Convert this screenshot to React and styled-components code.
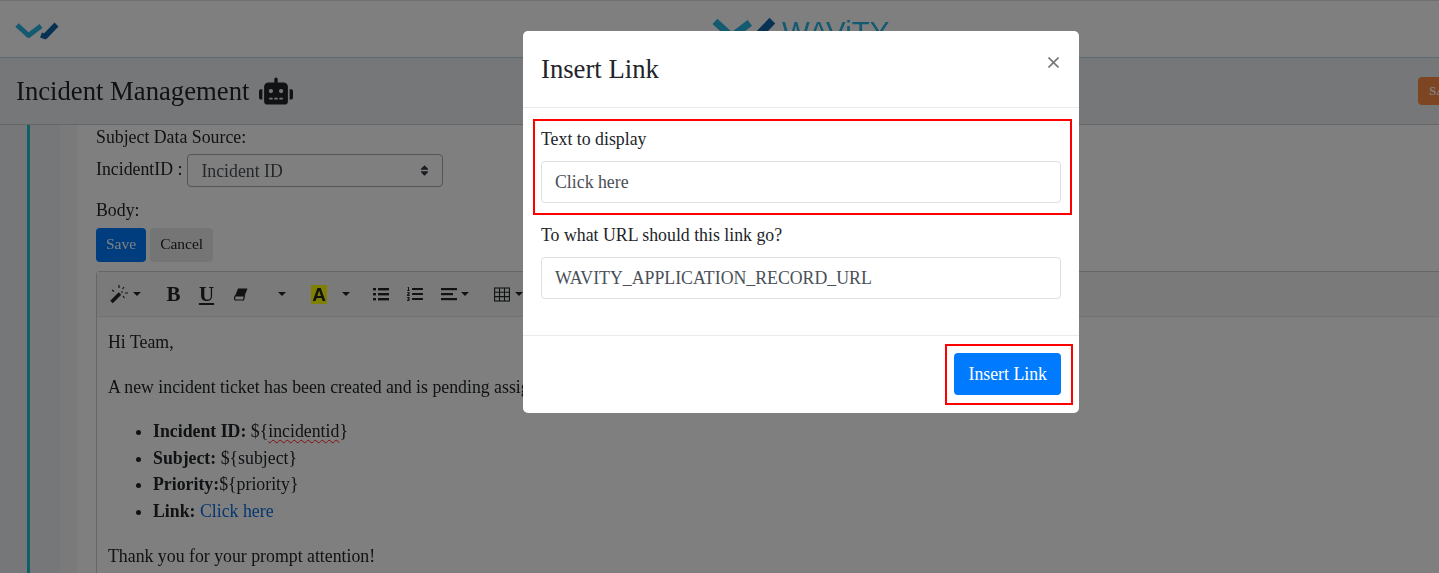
import React from 'react';
import styled, { createGlobalStyle } from 'styled-components';
import { FaRobot, FaListOl, FaSort } from 'react-icons/fa';

const GlobalStyle = createGlobalStyle`
  html, body {
    margin: 0;
    padding: 0;
    height: 100%;
    overflow: hidden;
    font-family: "Liberation Serif", "Times New Roman", serif;
    font-size: 17.8px;
    color: #212529;
    background: #fff;
  }
  * { box-sizing: border-box; }
`;

const Page = styled.div`
  position: relative;
  height: 573px;
  overflow: hidden;
  filter: blur(0.35px);
`;

const TopBar = styled.header`
  height: 58px;
  border-top: 1px solid #dedede;
  border-bottom: 1px solid #b4d4e0;
  display: flex;
  align-items: center;
  padding-left: 15px;
`;

const SmallMark = styled.span`
  display: flex;
  margin-top: 4px;
`;

const Brand = styled.div`
  align-self: flex-start;
  margin-left: 653px;
  padding-top: 16px;
  display: flex;
  align-items: flex-start;
  gap: 6px;
  color: #28b4e0;
  font-family: "Liberation Sans", Arial, sans-serif;
  font-size: 29.4px;
  line-height: 29px;
`;

const TitleBar = styled.div`
  height: 67px;
  background: #eceef1;
  border-bottom: 1px solid #ccc;
  display: flex;
  align-items: center;
  justify-content: space-between;
  padding-left: 16px;
`;

const PageTitle = styled.h1`
  margin: 0;
  font-size: 26.7px;
  font-weight: 400;
  display: flex;
  align-items: center;
  gap: 10px;
`;

const SubmitTab = styled.button`
  width: 60px;
  height: 28px;
  margin-right: -39px;
  padding: 0 0 0 11px;
  border: 0;
  border-radius: 4px;
  background: #fd8a45;
  color: #fff;
  font: 700 13px "Liberation Serif", serif;
  text-align: left;
`;

const Workspace = styled.div`
  display: grid;
  grid-template-columns: 27px 3px 30px 17px minmax(0, 1fr);
  height: 448px;
`;

const Gutter = styled.div`
  background: ${p => p.$bg};
`;

const Form = styled.main`
  padding-left: 19px;
  margin-right: -10px;
`;

const FieldLabel = styled.div`
  line-height: 24px;
`;

const SourceRow = styled.div`
  display: flex;
  align-items: flex-start;
  gap: 5px;
  margin: 5px 0 11px;
`;

const RowLabel = styled.span`
  padding-top: 5px;
`;

const SelectBox = styled.div`
  width: 256px;
  height: 33px;
  padding: 3px 13px 0;
  border: 1px solid #aaa;
  border-radius: 4px;
  color: #495057;
  display: flex;
  align-items: center;
  justify-content: space-between;
  line-height: 1;
  svg { font-size: 13px; color: #343a40; margin: -3px -2px 0 0; }
`;

const ButtonRow = styled.div`
  display: flex;
  gap: 4px;
  margin: 6px 0 9px;
`;

const SmallButton = styled.button`
  height: 34px;
  padding: 0 10px 2px;
  border: 0;
  border-radius: 4px;
  font: 15.5px "Liberation Serif", serif;
  background: ${p => (p.$primary ? '#007bff' : '#ebebeb')};
  color: ${p => (p.$primary ? '#fff' : '#212529')};
`;

const Editor = styled.section`
  border: 1px solid #ccc;
  border-bottom: 0;
  border-radius: 4px 4px 0 0;
`;

const Toolbar = styled.div`
  height: 45px;
  padding-left: 13px;
  border-bottom: 1px solid #e4e4e4;
  background: #f5f5f5;
  display: flex;
  align-items: center;
  color: #212529;
`;

const ToolIcon = styled.span`
  display: inline-flex;
  align-items: center;
  justify-content: center;
  flex: none;
  width: ${p => p.$w || 16}px;
  margin-right: ${p => p.$mr || 0}px;
  svg { display: block; }
`;

const SerifGlyph = styled.span`
  font: 700 21px/1 "Liberation Serif", serif;
  text-decoration: ${p => (p.$underline ? 'underline' : 'none')};
  text-underline-offset: 2px;
  text-decoration-thickness: 2px;
`;

const CaretShape = styled.span`
  width: 0;
  height: 0;
  border-left: 4px solid transparent;
  border-right: 4px solid transparent;
  border-top: 4px solid #212529;
`;

const Highlight = styled.span`
  flex: none;
  width: 16px;
  height: 19px;
  margin-right: 15px;
  background: #ffff00;
  color: #212529;
  font: 700 19px/20px "Liberation Sans", Arial, sans-serif;
  text-align: center;
`;

const EditorBody = styled.div`
  padding: 13px 11px;
  white-space: nowrap;
  p { margin: 0 0 21px; line-height: 24px; }
  p + ul { margin-top: -2px; }
  ul { margin: 0 0 19px; padding-left: 45px; line-height: 26.7px; }
  a { color: #0a6ee0; text-decoration: none; }
`;

const Misspelled = styled.span`
  text-decoration: underline wavy #ff2020 1px;
  text-decoration-skip-ink: none;
  text-underline-offset: 2px;
`;

const Backdrop = styled.div`
  position: absolute;
  inset: 0;
  background: rgba(0, 0, 0, 0.5);
  display: flex;
  align-items: flex-start;
  padding: 31px 0 0 523px;
`;

const Modal = styled.div`
  width: 556px;
  height: 382px;
  background: #fff;
  border-radius: 5px;
  display: flex;
  flex-direction: column;
`;

const ModalHeader = styled.div`
  height: 77px;
  padding: 21px 18px 0;
  border-bottom: 1px solid #e9ecef;
  display: flex;
  justify-content: space-between;
  align-items: flex-start;
`;

const ModalTitle = styled.h2`
  margin: 0;
  font-size: 26.7px;
  font-weight: 400;
  line-height: 34px;
`;

const CloseIcon = styled.svg`
  width: 11px;
  height: 11px;
  margin: 5px 2px 0 0;
  stroke: #777;
  stroke-width: 1.6;
`;

const ModalBody = styled.div`
  flex: 1;
  padding: 11px 18px 0;
`;

const Callout = styled.div`
  border: 2px solid #ff0000;
`;

const TextCallout = styled(Callout)`
  height: 96px;
  margin: 0 -11px 8px -8px;
  padding: 6px 9px 0 6px;
`;

const FieldGroup = styled.div`
  margin-bottom: 19px;
`;

const Label = styled.label`
  display: block;
  line-height: 24px;
  margin-bottom: 10px;
`;

const TextInput = styled.input`
  display: block;
  width: 100%;
  height: 42px;
  padding: 0 13px;
  border: 1px solid #dcdfe3;
  border-radius: 4px;
  font: 17.8px "Liberation Serif", serif;
  color: #495057;
  background: #fff;
`;

const ModalFooter = styled.div`
  height: 78px;
  border-top: 1px solid #e9ecef;
  padding-right: 18px;
  display: flex;
  justify-content: flex-end;
  align-items: center;
`;

const ButtonCallout = styled(Callout)`
  height: 61px;
  margin: -1px -12px 0 0;
  padding: 0 10px 0 7px;
  display: flex;
  align-items: center;
`;

const PrimaryButton = styled.button`
  height: 42px;
  padding: 0 14px;
  border: 0;
  border-radius: 4px;
  background: #007bff;
  color: #fff;
  font: 17.8px "Liberation Serif", serif;
`;

const WavityMark = ({ width = 44 }) => (
  <svg width={width} height={width * 0.4} viewBox="0 0 44 17.6" fill="none" strokeLinejoin="round">
    <path d="M2 3 L13.5 13.5 L26 4" stroke="#28b4e0" strokeWidth="5" />
    <path d="M26 13 L30 14.5 L41.5 2.5" stroke="#0f64a8" strokeWidth="5.5" />
  </svg>
);

const Caret = ({ mr }) => (
  <ToolIcon $w={8} $mr={mr}><CaretShape /></ToolIcon>
);

const MagicIcon = () => (
  <svg width="20" height="20" viewBox="0 0 20 20" fill="none" stroke="#212529">
    <path d="M1.5 18 L10 9.5" strokeWidth="3.6" />
    <path d="M9 1 V4 M14 3 L12.6 5 M15 9 H18 M2 6 L4 7.5 M13 12 L14.5 14 M11 8 H13" strokeWidth="1.2" />
  </svg>
);

const EraserIcon = () => (
  <svg width="14" height="13" viewBox="0 0 14 13">
    <path d="M4 0.5 H13.5 L10.5 8 H1 Z" fill="#212529" />
    <path d="M1 8 H10.5 L9.5 12 H1 L0.5 10 Z" fill="none" stroke="#212529" strokeWidth="1.2" />
  </svg>
);

const BulletsIcon = () => (
  <svg width="16" height="14" viewBox="0 0 16 14" fill="#212529">
    <rect x="0" y="1" width="3" height="2.4" />
    <rect x="5" y="1" width="11" height="2.4" />
    <rect x="0" y="6" width="3" height="2.4" />
    <rect x="5" y="6" width="11" height="2.4" />
    <rect x="0" y="11" width="3" height="2.4" />
    <rect x="5" y="11" width="11" height="2.4" />
  </svg>
);

const AlignIcon = () => (
  <svg width="16" height="14" viewBox="0 0 16 14" fill="#212529">
    <rect x="0" y="1" width="16" height="2.2" />
    <rect x="0" y="6" width="12" height="2.2" />
    <rect x="0" y="11" width="16" height="2.2" />
  </svg>
);

const TableIcon = () => (
  <svg width="16" height="15" viewBox="0 0 16 15" fill="none" stroke="#212529" strokeWidth="1.1">
    <rect x="0.6" y="1" width="14.8" height="13" />
    <path d="M0.6 5.3 H15.4 M0.6 9.6 H15.4 M5.5 1 V14 M10.5 1 V14" />
  </svg>
);

export default function App() {
  return (
    <Page>
      <GlobalStyle />
      <TopBar>
        <SmallMark><WavityMark /></SmallMark>
        <Brand>
          <WavityMark width={64} />
          WAViTY
        </Brand>
      </TopBar>
      <TitleBar>
        <PageTitle>
          Incident Management <FaRobot size={34} color="#212529" />
        </PageTitle>
        <SubmitTab>SAVE</SubmitTab>
      </TitleBar>
      <Workspace>
        <Gutter $bg="#eceef1" />
        <Gutter $bg="#20bcd0" />
        <Gutter $bg="#eceef1" />
        <Gutter $bg="#f5f5f5" />
        <Form>
          <FieldLabel>Subject Data Source:</FieldLabel>
          <SourceRow>
            <RowLabel>IncidentID :</RowLabel>
            <SelectBox>
              Incident ID
              <FaSort />
            </SelectBox>
          </SourceRow>
          <FieldLabel>Body:</FieldLabel>
          <ButtonRow>
            <SmallButton $primary>Save</SmallButton>
            <SmallButton>Cancel</SmallButton>
          </ButtonRow>
          <Editor>
            <Toolbar>
              <ToolIcon $w={20} $mr={3}><MagicIcon /></ToolIcon>
              <Caret mr={25} />
              <ToolIcon $w={15} $mr={18}><SerifGlyph>B</SerifGlyph></ToolIcon>
              <ToolIcon $w={15} $mr={20}><SerifGlyph $underline>U</SerifGlyph></ToolIcon>
              <ToolIcon $w={14} $mr={30}><EraserIcon /></ToolIcon>
              <Caret mr={25} />
              <Highlight>A</Highlight>
              <Caret mr={23} />
              <ToolIcon $mr={18}><BulletsIcon /></ToolIcon>
              <ToolIcon $mr={18}><FaListOl size={16} /></ToolIcon>
              <ToolIcon $mr={4}><AlignIcon /></ToolIcon>
              <Caret mr={25} />
              <ToolIcon $mr={5}><TableIcon /></ToolIcon>
              <Caret />
            </Toolbar>
            <EditorBody>
              <p>Hi Team,</p>
              <p>A new incident ticket has been created and is pending assignment.</p>
              <ul>
                <li><b>Incident ID:</b> ${'{'}<Misspelled>incidentid</Misspelled>{'}'}</li>
                <li><b>Subject:</b> ${'{subject}'}</li>
                <li><b>Priority:</b>${'{priority}'}</li>
                <li><b>Link:</b> <a href="#">Click here</a></li>
              </ul>
              <p>Thank you for your prompt attention!</p>
            </EditorBody>
          </Editor>
        </Form>
      </Workspace>
      <Backdrop>
        <Modal>
          <ModalHeader>
            <ModalTitle>Insert Link</ModalTitle>
            <CloseIcon viewBox="0 0 11 11"><path d="M0.5 0.5 L10.5 10.5 M10.5 0.5 L0.5 10.5" /></CloseIcon>
          </ModalHeader>
          <ModalBody>
            <TextCallout>
              <Label>Text to display</Label>
              <TextInput defaultValue="Click here" />
            </TextCallout>
            <FieldGroup>
              <Label>To what URL should this link go?</Label>
              <TextInput defaultValue="WAVITY_APPLICATION_RECORD_URL" />
            </FieldGroup>
          </ModalBody>
          <ModalFooter>
            <ButtonCallout>
              <PrimaryButton>Insert Link</PrimaryButton>
            </ButtonCallout>
          </ModalFooter>
        </Modal>
      </Backdrop>
    </Page>
  );
}
